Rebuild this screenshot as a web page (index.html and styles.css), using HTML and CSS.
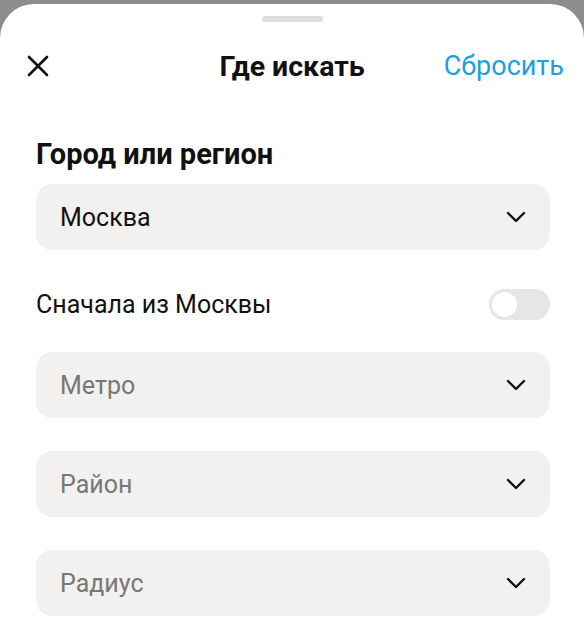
FILE: index.html
```html
<!DOCTYPE html>
<html>
<head>
	<title>Где искать</title>
	<link rel="stylesheet" href="styles.css">
</head>
<body>
	<div class="sheet">
		<div class="handle"></div>
		<div class="header">
			<button class="close" aria-label="Закрыть">
				<svg width="22" height="22" viewBox="0 0 22 22"><path d="M2 2 L20 20 M20 2 L2 20" stroke="#111" stroke-width="2.6" stroke-linecap="round" fill="none"/></svg>
			</button>
			<div class="title">Где искать</div>
			<button class="reset">Сбросить</button>
		</div>

		<div class="content">
			<div class="label">Город или регион</div>
			<div class="select">
				<span class="value">Москва</span>
				<svg class="chevron" width="20" height="12" viewBox="0 0 20 12"><path d="M2 2 L10 10 L18 2" stroke="#111" stroke-width="2.4" stroke-linecap="round" stroke-linejoin="round" fill="none"/></svg>
			</div>

			<div class="toggle-row">
				<span>Сначала из Москвы</span>
				<div class="toggle"><div class="knob"></div></div>
			</div>

			<div class="select">
				<span class="placeholder">Метро</span>
				<svg class="chevron" width="20" height="12" viewBox="0 0 20 12"><path d="M2 2 L10 10 L18 2" stroke="#111" stroke-width="2.4" stroke-linecap="round" stroke-linejoin="round" fill="none"/></svg>
			</div>
			<div class="select">
				<span class="placeholder">Район</span>
				<svg class="chevron" width="20" height="12" viewBox="0 0 20 12"><path d="M2 2 L10 10 L18 2" stroke="#111" stroke-width="2.4" stroke-linecap="round" stroke-linejoin="round" fill="none"/></svg>
			</div>
			<div class="select">
				<span class="placeholder">Радиус</span>
				<svg class="chevron" width="20" height="12" viewBox="0 0 20 12"><path d="M2 2 L10 10 L18 2" stroke="#111" stroke-width="2.4" stroke-linecap="round" stroke-linejoin="round" fill="none"/></svg>
			</div>
		</div>
	</div>
</body>
</html>
```

FILE: styles.css
```css
* {
	box-sizing: border-box;
}

html, body {
	height: 100%;
}

body {
	margin: 0;
	background: #8d8d8d;
	font-family: Roboto, "Noto Sans", sans-serif;
	color: #111;
	overflow: hidden;
}

.sheet {
	margin-top: 4px;
	height: calc(100% - 4px);
	background: #fff;
	border-radius: 34px 34px 0 0;
	padding-top: 12px;
}

.handle {
	width: 61px;
	height: 6px;
	border-radius: 3px;
	background: #dedede;
	margin: 0 auto;
}

.header {
	display: flex;
	align-items: center;
	justify-content: space-between;
	height: 62px;
	padding: 0 20px 0 27px;
	margin-top: 13px;
	position: relative;
}

.header button {
	border: none;
	background: none;
	padding: 0;
	font-family: inherit;
	cursor: pointer;
}

.close {
	display: flex;
}

.title {
	position: absolute;
	left: 0;
	right: 0;
	text-align: center;
	font-size: 28.5px;
	font-weight: 700;
	pointer-events: none;
}

.reset {
	font-size: 27px;
	color: #1a9fe0;
}

.content {
	padding: 0 34px 0 36px;
}

.label {
	font-size: 29px;
	font-weight: 700;
	margin-top: 40px;
	line-height: 34px;
}

.select {
	display: flex;
	align-items: center;
	justify-content: space-between;
	height: 66px;
	background: #f2f1f0;
	border-radius: 16px;
	padding: 0 24px;
	font-size: 25px;
	margin-top: 33px;
}

.label + .select {
	margin-top: 13px;
}

.placeholder {
	color: #777;
}

.toggle-row {
	display: flex;
	align-items: center;
	justify-content: space-between;
	font-size: 25px;
	margin-top: 38px;
	height: 32px;
	margin-bottom: -1px;
}

.toggle {
	width: 61px;
	height: 31px;
	border-radius: 16px;
	background: #e8e6e4;
	padding: 3px;
}

.knob {
	width: 25px;
	height: 25px;
	border-radius: 50%;
	background: #fff;
}
```
